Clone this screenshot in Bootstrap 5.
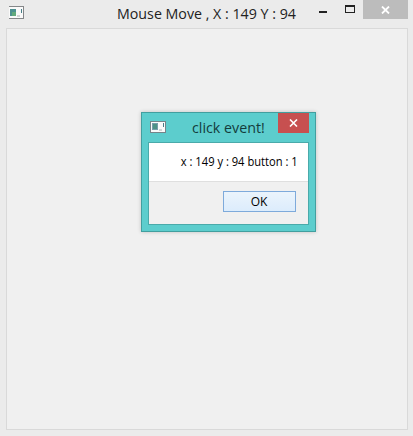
<!DOCTYPE html>
<html lang="en">
<head>
<meta charset="utf-8">
<meta name="viewport" content="width=device-width, initial-scale=1">
<title>Mouse Move</title>
<link href="https://cdn.jsdelivr.net/npm/bootstrap@5.3.0/dist/css/bootstrap.min.css" rel="stylesheet">
<style>
body{background:#ebebeb;font-family:"Open Sans","Noto Sans",sans-serif;color:#222;overflow:hidden}
.app-window{height:436px;padding:0 5px 6px 6px}
.app-title{height:28px}
.title-text{font-size:15px;line-height:20px;white-space:nowrap;transform-origin:0 50%}
.app-title .title-text{margin:3px 0 0 93px;width:179px;transform:scaleX(.949)}
.app-icon{width:16px;height:14px;margin:6px 0 0 2px}
.min-glyph{width:8px;height:2px;background:#222;margin:11px 0 0 23px}
.max-glyph{width:10px;height:8px;border:1px solid #222;border-top-width:2px;margin:5px 0 0 18px}
.btn-x{border:0;padding:0;border-radius:0;line-height:0;transition:none}
.x-muted{width:45px;height:19px;background:#bcbcbc;margin-left:8px}
.x-red{width:31px;height:20px;background:#c75050}
.client{background:#f0f0f0;border:1px solid #d9d9d9}
.dialog-frame{left:141px;top:112px;width:175px;height:120px;background:#5ccdcd;border:1px solid #429f9f;padding:0 6px 6px;box-shadow:0 0 4px #0003}
.dialog-title{height:29px}
.dialog-title .app-icon{margin:7px 0 0 2px}
.dialog-title .title-text{color:#143c3c;margin:4px 0 0 26px;width:86px;transform:scaleX(.95)}
.dialog-inner{background:#f0f0f0;border:1px solid #4aaaaa}
.message{height:39px;background:#fff;border-bottom:1px solid #dfdfdf;padding:0 10px 0 0}
.message span,.ok-text{font-size:12px;line-height:16px;color:#000;white-space:nowrap;display:block}
.message span{transform:scaleX(.93);transform-origin:100% 50%}
.ok-btn,.ok-btn:hover{width:73px;height:21px;border:1px solid #7eaadb;border-radius:0;background:linear-gradient(#ebf4fc,#dcecfc);padding:0 1px 0 0;margin:9px 12px 0 0;transition:none}
</style>
<script src="https://cdn.jsdelivr.net/npm/bootstrap@5.3.0/dist/js/bootstrap.bundle.min.js"></script>
</head>
<body>
<main class="app-window d-flex flex-column">
  <header class="app-title d-flex align-items-start flex-shrink-0">
    <svg class="app-icon flex-shrink-0" viewBox="0 0 16 14" shape-rendering="crispEdges"><path fill="#858789" d="M1 0h15v13H1z"/><path fill="#fafafa" d="M1 1h14v11H1z"/><path fill="#4d9191" d="M2 3h6v7H2z"/><path fill="#62aa7c" d="M4 6h4v4H4z"/><path fill="#d1d5d5" d="M9 9h3v2H9z"/><path fill="#477e87" d="M13 3h1v4h-1z"/></svg>
    <div class="title-text flex-shrink-0">Mouse Move , X : 149 Y : 94</div>
    <div class="min-glyph flex-shrink-0"></div>
    <div class="max-glyph flex-shrink-0"></div>
    <button class="btn btn-x x-muted flex-shrink-0" aria-label="Close"><svg width="9" height="8" viewBox="0 0 9 8"><path d="M1 .5 8 7.5M8 .5 1 7.5" stroke="#fff" stroke-width="1.8"/></svg></button>
  </header>
  <section class="client flex-grow-1"></section>
</main>
<div class="dialog-frame position-absolute d-flex flex-column" role="dialog">
  <header class="dialog-title d-flex align-items-start flex-shrink-0">
    <svg class="app-icon flex-shrink-0" viewBox="0 0 16 14" shape-rendering="crispEdges"><path fill="#75858a" d="M0 1h16v12H0z"/><path fill="#fafafa" d="M1 2h14v10H1z"/><path fill="#779caa" d="M2 3h6v7H2z"/><path fill="#4d9185" d="M3 4h4v5H3z"/><path fill="#d1d5d5" d="M9 9h3v2H9z"/><path fill="#477e87" d="M13 3h1v4h-1z"/></svg>
    <div class="title-text flex-shrink-0">click event!</div>
    <button class="btn btn-x x-red flex-shrink-0" aria-label="Close"><svg width="9" height="8" viewBox="0 0 9 8"><path d="M1 .5 8 7.5M8 .5 1 7.5" stroke="#fff" stroke-width="1.6"/></svg></button>
  </header>
  <div class="dialog-inner flex-grow-1">
    <div class="message d-flex align-items-center justify-content-end"><span>x : 149 y : 94 button : 1</span></div>
    <div class="d-flex justify-content-end"><button class="btn ok-btn d-flex align-items-center justify-content-center"><span class="ok-text">OK</span></button></div>
  </div>
</div>
</body>
</html>
